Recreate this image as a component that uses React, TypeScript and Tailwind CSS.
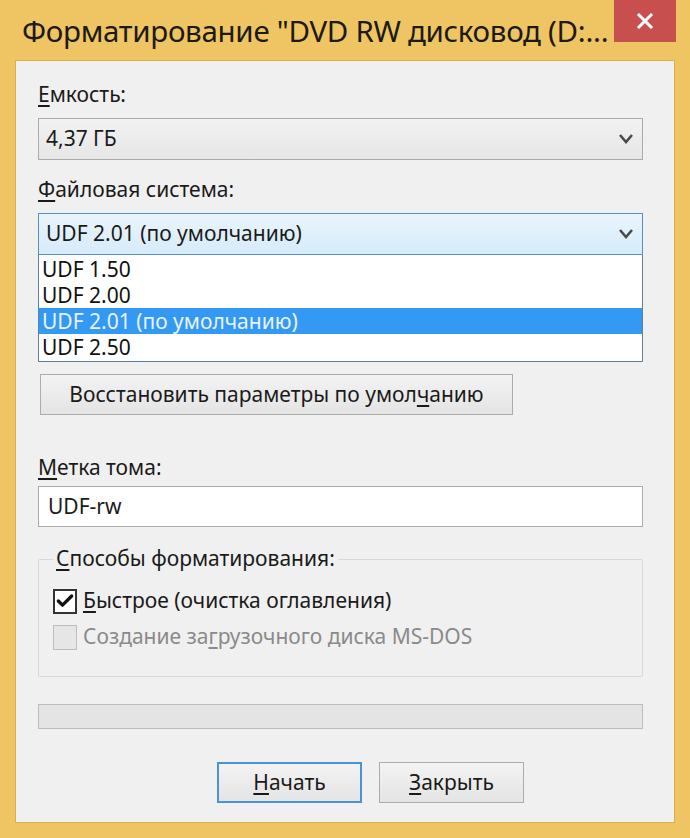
import { Check } from "lucide-react";

const font = "font-['Noto_Sans','Open_Sans',sans-serif]";

const Chevron = () => (
  <svg width="16" height="12" viewBox="0 0 16 12" className="shrink-0">
    <polyline points="2,2 8,9 14,2" fill="none" stroke="#4a4a4a" strokeWidth="2.6" />
  </svg>
);

const Label = ({ children }: { children: React.ReactNode }) => (
  <div className="h-[28px] leading-[28px] text-[21px] text-[#1a1a1a]">{children}</div>
);

const Combo = ({ value, focused }: { value: string; focused?: boolean }) => (
  <div
    className={
      focused
        ? "h-[42px] flex items-center justify-between pl-[7px] pr-[8px] border border-[#5a8fc4] bg-gradient-to-b from-[#eaf5fd] to-[#d6ebfa]"
        : "h-[42px] flex items-center justify-between pl-[7px] pr-[8px] border border-[#ababab] bg-gradient-to-b from-[#f2f2f2] to-[#e6e6e6]"
    }
  >
    <span className="text-[21px] text-[#1a1a1a]">{value}</span>
    <Chevron />
  </div>
);

const WinButton = ({ children, focused, w }: { children: React.ReactNode; focused?: boolean; w: string }) => (
  <div
    className={`${w} h-[41px] flex items-center justify-center text-[21px] text-[#1a1a1a] bg-gradient-to-b from-[#f3f3f3] to-[#e4e4e4] ${
      focused ? "border-2 border-[#4a94d4]" : "border border-[#acacac]"
    }`}
  >
    {children}
  </div>
);

export default function App() {
  return (
    <div className={`w-[690px] h-[838px] bg-[#efc462] flex flex-col ${font}`}>
      {/* title bar */}
      <div className="h-[60px] flex items-start">
        <div className="flex-1 pl-[22px] pt-[11px] text-[29.5px] leading-[40px] text-[#1c1a14] tracking-[-0.3px] whitespace-nowrap">
          Форматирование "DVD RW дисковод (D:...
        </div>
        <div className="w-[62px] h-[42px] mr-[14px] bg-[#c7504f] flex items-center justify-center">
          <svg width="18" height="18" viewBox="0 0 18 18">
            <path d="M3 3 L15 15 M15 3 L3 15" stroke="#ffffff" strokeWidth="3" strokeLinecap="square" />
          </svg>
        </div>
      </div>

      {/* client area */}
      <div className="mx-[15px] h-[763px] bg-[#f0f0f0] border border-[#d9ad50] pl-[22px] pr-[31px] flex flex-col">
        <div className="mt-[19px]">
          <Label>
            <span className="underline underline-offset-[3px]">Е</span>мкость:
          </Label>
        </div>
        <div className="mt-[10px]">
          <Combo value="4,37 ГБ" />
        </div>
        <div className="mt-[15px]">
          <Label>
            <span className="underline underline-offset-[3px]">Ф</span>айловая система:
          </Label>
        </div>
        <div className="mt-[10px]">
          <Combo value="UDF 2.01 (по умолчанию)" focused />
          <div className="border border-t-0 border-[#5f7fa0] bg-white py-[1px] text-[21px] leading-[26px] text-[#111]">
            <div className="pl-[3px]">UDF 1.50</div>
            <div className="pl-[3px]">UDF 2.00</div>
            <div className="pl-[3px] bg-[#3399f3] text-[#eaf3fd]">UDF 2.01 (по умолчанию)</div>
            <div className="pl-[3px]">UDF 2.50</div>
          </div>
        </div>
        <div className="mt-[12px] pl-[2px]">
          <WinButton w="w-[473px]">
            Восстановить параметры по умол<span className="underline underline-offset-[3px]">ч</span>анию
          </WinButton>
        </div>
        <div className="mt-[38px]">
          <Label>
            <span className="underline underline-offset-[3px]">М</span>етка тома:
          </Label>
        </div>
        <div className="mt-[5px] h-[41px] bg-white border border-[#ababab] flex items-center pl-[9px] text-[21px] text-[#1a1a1a]">
          UDF-rw
        </div>

        {/* group box */}
        <div className="mt-[32px] h-[118px] border border-[#d8d8d8] rounded-[2px] flex flex-col pl-[14px]">
          <div className="-mt-[16px] self-start bg-[#f0f0f0] px-[3px] text-[21px] leading-[28px] text-[#1a1a1a]">
            <span className="underline underline-offset-[3px]">С</span>пособы форматирования:
          </div>
          <div className="mt-[16px] flex items-center gap-[6px] h-[26px]">
            <div className="w-[24px] h-[25px] bg-white border-2 border-[#333] flex items-center justify-center">
              <Check size={20} strokeWidth={4} color="#111" />
            </div>
            <span className="text-[21px] text-[#1a1a1a]">
              <span className="underline underline-offset-[3px]">Б</span>ыстрое (очистка оглавления)
            </span>
          </div>
          <div className="mt-[10px] flex items-center gap-[6px] h-[26px]">
            <div className="w-[24px] h-[25px] bg-[#e6e6e6] border border-[#bdbdbd]" />
            <span className="text-[21px] text-[#8a8a8a]">
              Создание за<span className="underline underline-offset-[3px]">г</span>рузочного диска MS-DOS
            </span>
          </div>
        </div>

        {/* progress */}
        <div className="mt-[27px] h-[25px] bg-[#e4e4e4] border border-[#bcbcbc]" />

        {/* buttons */}
        <div className="mt-[33px] flex pl-[179px] gap-[17px]">
          <WinButton w="w-[145px]" focused>
            <span>
              <span className="underline underline-offset-[3px]">Н</span>ачать
            </span>
          </WinButton>
          <WinButton w="w-[145px]">
            <span>
              <span className="underline underline-offset-[3px]">З</span>акрыть
            </span>
          </WinButton>
        </div>
      </div>
    </div>
  );
}
